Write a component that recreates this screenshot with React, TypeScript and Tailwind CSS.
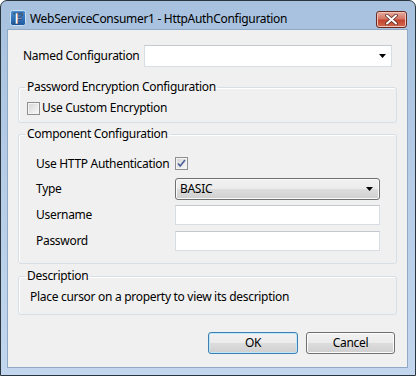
import React from 'react';

const Arrow = () => (
  <svg width="7" height="4" viewBox="0 0 7 4" className="shrink-0">
    <path d="M0 0h7L3.5 4z" fill="#000" />
  </svg>
);

const CheckBox = ({ checked }: { checked?: boolean }) => (
  <span className="flex h-[13px] w-[13px] shrink-0 items-center justify-center border border-[#8e8f8f] bg-gradient-to-br from-[#d5d5d5] to-[#fafafa] shadow-[inset_0_0_0_1px_#f4f4f4]">
    {checked && (
      <svg width="9" height="9" viewBox="0 0 9 9">
        <path d="M1 4.5l2.2 2.5L8 1" stroke="#4a5f97" strokeWidth="1.6" fill="none" />
      </svg>
    )}
  </span>
);

const Group = ({ title, children }: { title: string; children: React.ReactNode }) => (
  <fieldset className="rounded-[3px] border border-[#d5dfe5] shadow-[inset_1px_1px_0_#fff]">
    <legend className="ml-[6px] px-[2px] leading-[16px]">{title}</legend>
    {children}
  </fieldset>
);

const Field = () => (
  <div className="h-[20px] w-[205px] border border-[#d8dde3] border-t-[#c4c9cf] bg-white" />
);

const Button = ({ label, primary }: { label: string; primary?: boolean }) => (
  <button
    className={`flex h-[22px] items-center justify-center rounded-[3px] border bg-[linear-gradient(#f2f2f2,#ebebeb_50%,#dddddd_50%,#cfcfcf)] ${
      primary
        ? 'w-[90px] border-[#3c7fb1] shadow-[inset_0_0_0_1px_#bfe6f9]'
        : 'w-[89px] border-[#707070] shadow-[inset_0_0_0_1px_#fcfcfc]'
    }`}
  >
    {label}
  </button>
);

export default function App() {
  return (
    <div className="h-[376px] w-[416px] whitespace-nowrap font-['Segoe_UI','Noto_Sans',sans-serif] text-[12px] leading-[16px] tracking-[-0.3px] text-black">
      <div className="flex h-full flex-col rounded-t-[7px] border border-[#2b3540] bg-gradient-to-b from-[#a7c1de] via-[#b7cde8] to-[#c2d7ee] pb-[7px] pl-[6px] pr-[7px]">
        {/* title bar */}
        <div className="flex h-[28px] items-start pt-[9px]">
          <svg width="16" height="16" viewBox="0 0 16 16" className="ml-[3px] shrink-0">
            <defs>
              <linearGradient id="ic" x1="0" y1="0" x2="0" y2="1">
                <stop offset="0" stopColor="#4d8fd1" />
                <stop offset="1" stopColor="#1c5aa0" />
              </linearGradient>
            </defs>
            <rect x="0.5" y="0.5" width="15" height="15" rx="2" fill="url(#ic)" stroke="#c9dff3" />
            <text x="8" y="13.5" textAnchor="middle" fontFamily="'DejaVu Serif',serif" fontWeight="bold" fontSize="14" fill="#fff" stroke="#0d2f5c" strokeWidth="0.6">
              F
            </text>
          </svg>
          <span className="ml-[4px] mt-[1px] flex-1 text-[12px]">WebServiceConsumer1 - HttpAuthConfiguration</span>
          <div className="mr-[1px] mt-[1px] flex h-[17px] w-[31px] items-center justify-center rounded-[3px] border border-[#6b2a20] bg-[linear-gradient(#e8ac9f,#d47664_45%,#c4442e_55%,#d06a4e)] shadow-[inset_0_0_0_1px_#eec2b6]">
            <svg width="13" height="11" viewBox="0 0 13 11">
              <path d="M2 1.5l9 8M11 1.5l-9 8" stroke="#5a2a24" strokeWidth="3.6" strokeLinecap="round" />
              <path d="M2 1.5l9 8M11 1.5l-9 8" stroke="#fff" strokeWidth="2" strokeLinecap="round" />
            </svg>
          </div>
        </div>

        {/* client area */}
        <div className="flex flex-1 flex-col border border-[#8fa8c4] bg-[#f0f0f0] px-[10px]">
          <div className="mt-[15px] flex items-center px-[5px]">
            <span className="w-[121px] shrink-0">Named Configuration</span>
            <div className="flex h-[22px] flex-1 items-center justify-end border border-[#d8dde3] border-t-[#c4c9cf] bg-white pr-[5px]">
              <Arrow />
            </div>
          </div>

          <div className="mt-[12px]">
            <Group title="Password Encryption Configuration">
              <div className="mt-[5px] flex items-center gap-[2px] pb-[6px] pl-[8px]">
                <CheckBox />
                <span>Use Custom Encryption</span>
              </div>
            </Group>
          </div>

          <div className="mt-[3px]">
            <Group title="Component Configuration">
              <div className="flex flex-col pb-[12px] pl-[17px]">
                <div className="mt-[15px] flex h-[13px] items-center">
                  <span className="w-[139px] shrink-0">Use HTTP Authentication</span>
                  <CheckBox checked />
                </div>
                <div className="mt-[8px] flex items-center">
                  <span className="w-[139px] shrink-0">Type</span>
                  <div className="flex h-[22px] w-[205px] items-center justify-between rounded-[3px] border border-[#707070] bg-[linear-gradient(#f2f2f2,#ebebeb_50%,#dddddd_50%,#cfcfcf)] pl-[4px] pr-[6px] shadow-[inset_0_0_0_1px_#fafafa]">
                    <span>BASIC</span>
                    <Arrow />
                  </div>
                </div>
                <div className="mt-[5px] flex items-center">
                  <span className="w-[139px] shrink-0">Username</span>
                  <Field />
                </div>
                <div className="mt-[6px] flex items-center">
                  <span className="w-[139px] shrink-0">Password</span>
                  <Field />
                </div>
              </div>
            </Group>
          </div>

          <div className="mt-[4px]">
            <Group title="Description">
              <div className="mt-[5px] pb-[9px] pl-[11px]">Place cursor on a property to view its description</div>
            </Group>
          </div>

          <div className="mt-[17px] flex justify-end gap-[8px] pr-[2px]">
            <Button label="OK" primary />
            <Button label="Cancel" />
          </div>
        </div>
      </div>
    </div>
  );
}
